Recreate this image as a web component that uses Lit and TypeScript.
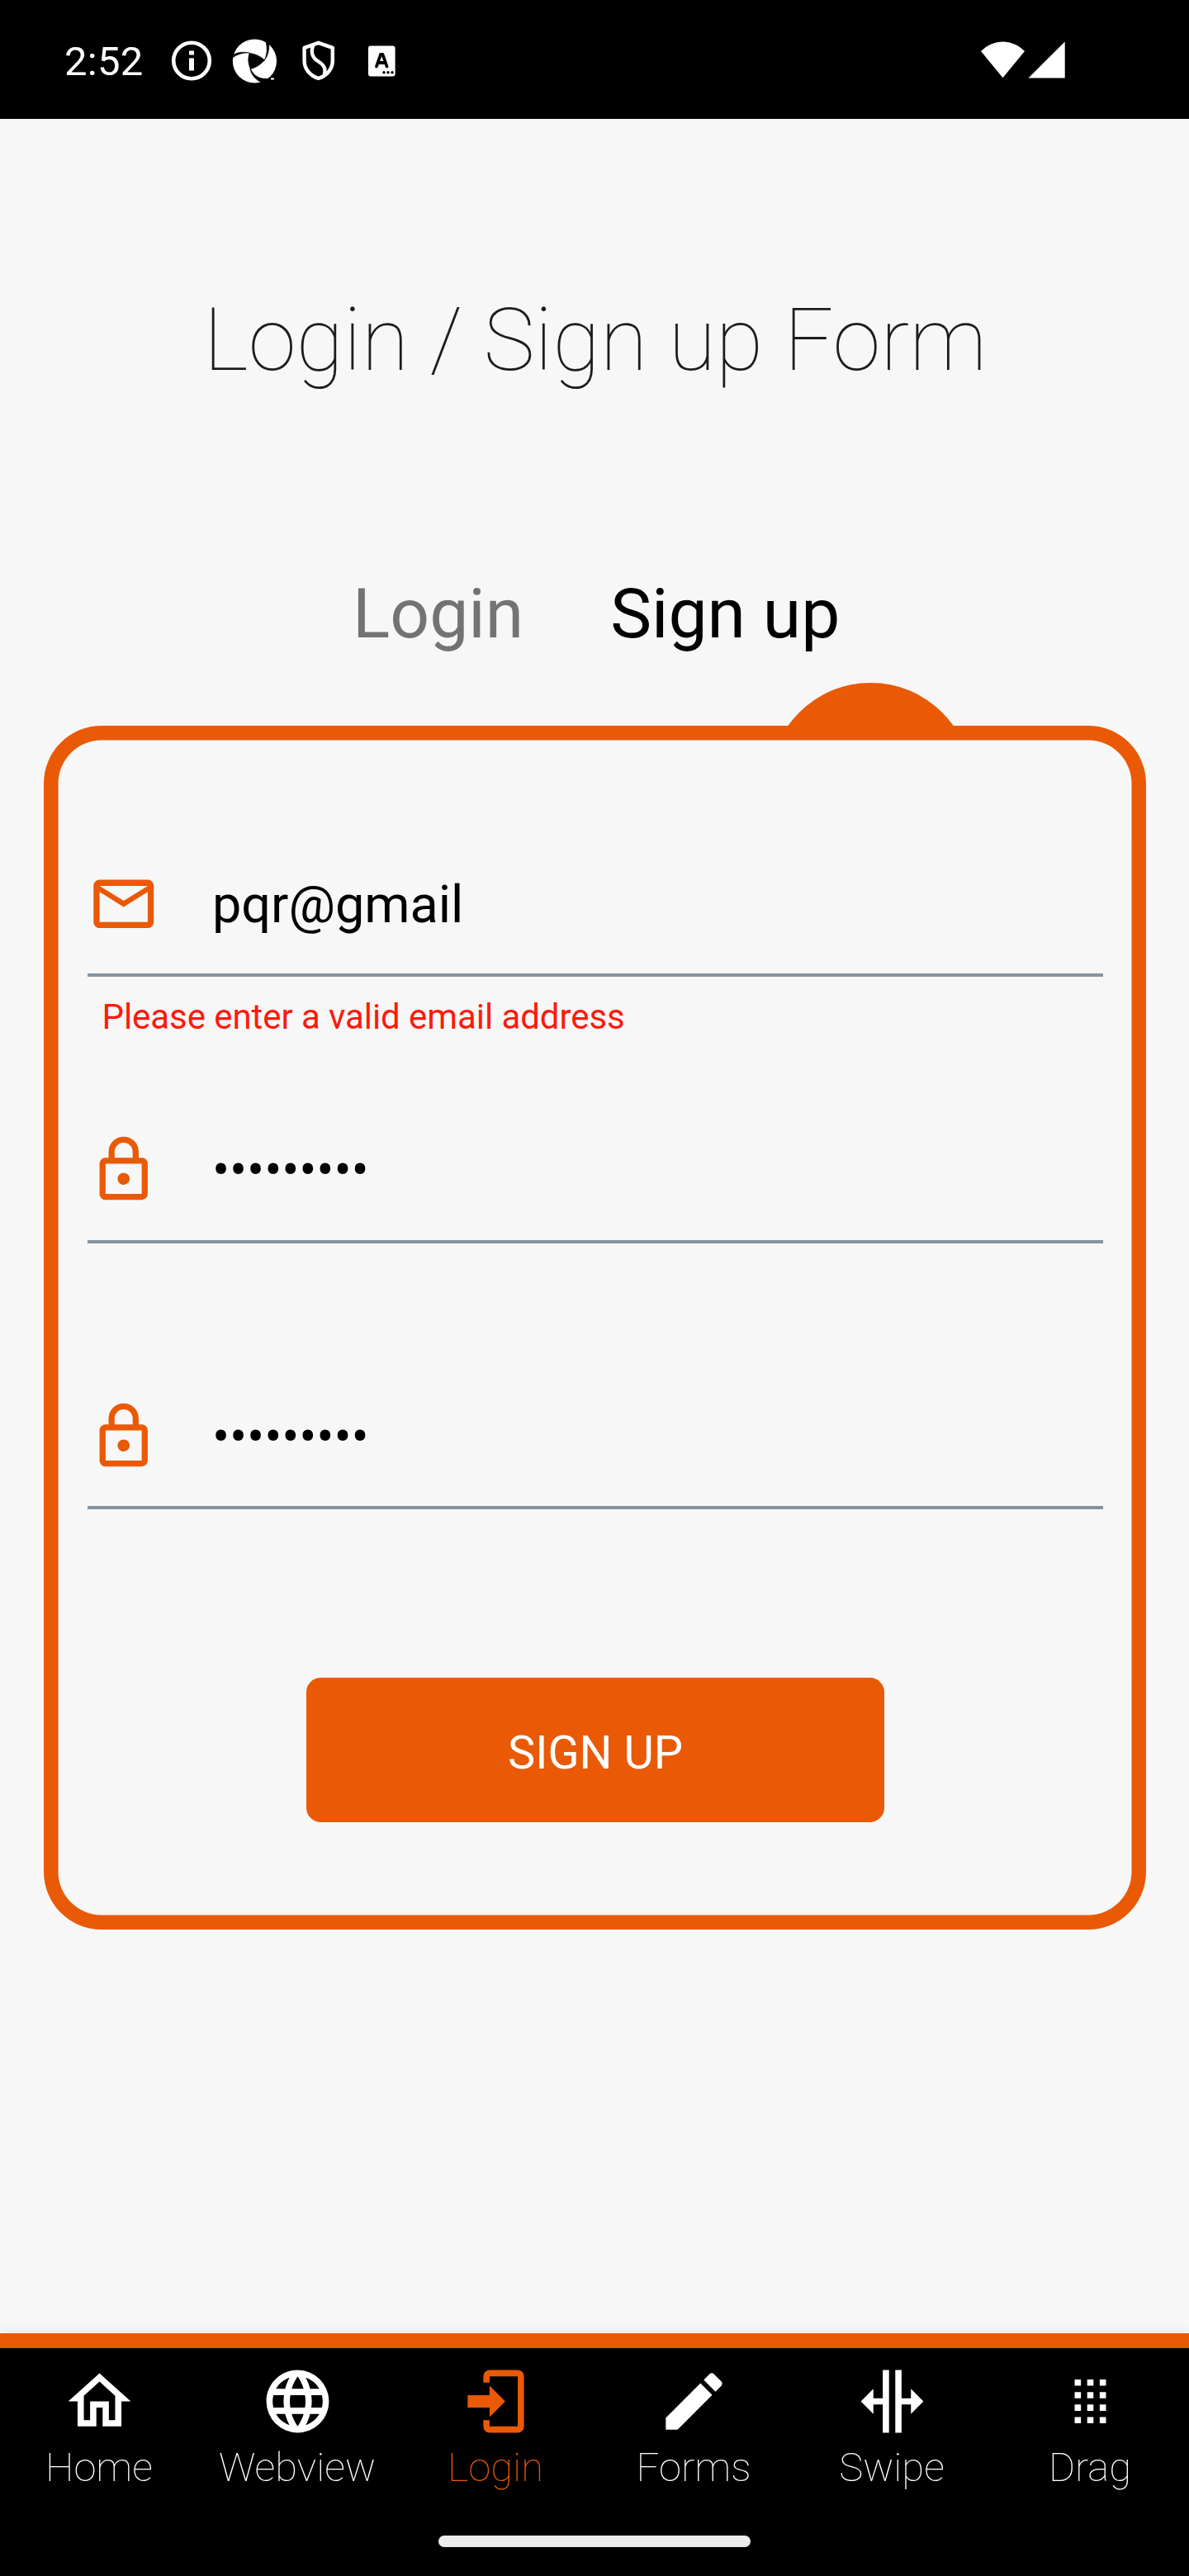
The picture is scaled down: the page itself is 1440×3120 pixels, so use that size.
import { LitElement, html, css, svg } from "lit";
import { customElement, property } from "lit/decorators.js";

const ICONS: Record<string, string> = {
  home: "M12,5.69L17,10.19V18H15V12H9V18H7V10.19L12,5.69M12,3L2,12H5V20H11V14H13V20H19V12H22L12,3Z",
  web: "M16.36,14C16.44,13.34 16.5,12.68 16.5,12C16.5,11.32 16.44,10.66 16.36,10H19.74C19.9,10.64 20,11.31 20,12C20,12.69 19.9,13.36 19.74,14M14.59,19.56C15.19,18.45 15.65,17.25 15.97,16H18.92C17.96,17.65 16.43,18.93 14.59,19.56M14.34,14H9.66C9.56,13.34 9.5,12.68 9.5,12C9.5,11.32 9.56,10.65 9.66,10H14.34C14.43,10.65 14.5,11.32 14.5,12C14.5,12.68 14.43,13.34 14.34,14M12,19.96C11.17,18.76 10.5,17.43 10.09,16H13.91C13.5,17.43 12.83,18.76 12,19.96M8,8H5.08C6.03,6.34 7.57,5.06 9.4,4.44C8.8,5.55 8.35,6.75 8,8M5.08,16H8C8.35,17.25 8.8,18.45 9.4,19.56C7.57,18.93 6.03,17.65 5.08,16M4.26,14C4.1,13.36 4,12.69 4,12C4,11.31 4.1,10.64 4.26,10H7.64C7.56,10.66 7.5,11.32 7.5,12C7.5,12.68 7.56,13.34 7.64,14M12,4.03C12.83,5.23 13.5,6.57 13.91,8H10.09C10.5,6.57 11.17,5.23 12,4.03M18.92,8H15.97C15.65,6.75 15.19,5.55 14.59,4.44C16.43,5.07 17.96,6.34 18.92,8M12,2C6.47,2 2,6.5 2,12A10,10 0 0,0 12,22A10,10 0 0,0 22,12A10,10 0 0,0 12,2Z",
  login: "M10,17V14H3V10H10V7L15,12L10,17M10,2H19A2,2 0 0,1 21,4V20A2,2 0 0,1 19,22H10A2,2 0 0,1 8,20V18H10V20H19V4H10V6H8V4A2,2 0 0,1 10,2Z",
  pencil: "M20.71,7.04C21.1,6.65 21.1,6 20.71,5.63L18.37,3.29C18,2.9 17.35,2.9 16.96,3.29L15.12,5.12L18.87,8.87M3,17.25V21H6.75L17.81,9.93L14.06,6.18L3,17.25Z",
  swipe: "M18,16V13H15V22H13V2H15V11H18V8L22,12L18,16M2,12L6,16V13H9V22H11V2H9V11H6V8L2,12Z",
  drag: "M7,19V17H9V19H7M11,19V17H13V19H11M15,19V17H17V19H15M7,15V13H9V15H7M11,15V13H13V15H11M15,15V13H17V15H15M7,11V9H9V11H7M11,11V9H13V11H11M15,11V9H17V11H15M7,7V5H9V7H7M11,7V5H13V7H11M15,7V5H17V7H15Z",
  email: "M22,6C22,4.9 21.1,4 20,4H4C2.9,4 2,4.9 2,6V18C2,19.1 2.9,20 4,20H20C21.1,20 22,19.1 22,18V6M20,6L12,11L4,6H20M20,18H4V8L12,13L20,8V18Z",
  lock: "M12,17C10.89,17 10,16.1 10,15C10,13.89 10.89,13 12,13A2,2 0 0,1 14,15A2,2 0 0,1 12,17M18,20V10H6V20H18M18,8A2,2 0 0,1 20,10V20A2,2 0 0,1 18,22H6C4.89,22 4,21.1 4,20V10C4,8.89 4.89,8 6,8H7V6A5,5 0 0,1 12,1A5,5 0 0,1 17,6V8H18M12,3A3,3 0 0,0 9,6V8H15V6A3,3 0 0,0 12,3Z",
};

@customElement("glyph-icon")
class GlyphIcon extends LitElement {
  @property() name = "";
  static styles = css`
    :host { display: block; flex: none; }
    svg { display: block; width: 100%; height: 100%; fill: currentColor; }
  `;
  render() {
    return html`<svg viewBox="0 0 24 24">${svg`<path d=${ICONS[this.name] ?? ""}></path>`}</svg>`;
  }
}

@customElement("status-bar")
class StatusBar extends LitElement {
  static styles = css`
    :host { display: flex; height: 144px; background: #000; color: #fff; }
    .left { display: flex; align-items: center; height: 147px; padding-left: 78px; }
    .time { width: 127px; font-size: 49px; line-height: 60px; padding-top: 2px; letter-spacing: 0.3px; }
    .badges, .radio { display: block; flex: none; }
    .radio { margin-left: auto; margin-right: 140px; }
  `;
  render() {
    return html`
      <div class="left">
        <div class="time">2:52</div>
        <svg class="badges" width="290" height="60" viewBox="205 43.5 290 60">
          <circle cx="232" cy="73" r="21.8" fill="none" stroke="#fff" stroke-width="4.6"></circle>
          <path fill="#fff" d="M229,61h6v5h-6zM229,70h6v15h-6z"></path>
          <circle cx="308.4" cy="73.5" r="26.6" fill="#fff"></circle>
          <g fill="#000" stroke="#000" stroke-width="0.6">
            <path d="M302,64C309,64.5 316,68 320.5,72.5C315,78 309,82 303.3,83C300.5,77 300,70 302,64Z"></path>
            <path d="M281,66.5C287,62.6 294,61.8 302,63.6C294,63.4 288,65 281,69.8Z"></path>
            <path d="M321.5,48C324,57 323.8,65 320.2,72.5C325.3,66 326.3,59 325.6,51Z"></path>
            <path d="M302.8,83C305,91 309.5,96 317,99.6L326.5,94.6C315,96 308,92 303.4,83Z"></path>
          </g>
          <path fill="#fff" d="M328,94h4v2h-4z"></path>
          <path fill="none" stroke="#fff" stroke-width="4.4" stroke-linejoin="round" d="M385.7,51.3L402.8,57.3V73C402.8,84 395,91.5 385.7,94.5C376.5,91.5 368.6,84 368.6,73V57.3Z"></path>
          <path fill="none" stroke="#fff" stroke-width="4.4" d="M379.5,54C376,62 378,69 385,73.5C393,78.5 395,83 392.5,91"></path>
          <rect x="446" y="55" width="32.6" height="37" rx="3" fill="#fff"></rect>
          <path fill="none" stroke="#000" stroke-width="3.8" stroke-linecap="round" stroke-linejoin="round" d="M456,80L461,65.5H463.5L468.5,80M458,75.5H466.5"></path>
          <g fill="#000"><circle cx="465" cy="87.3" r="1.7"></circle><circle cx="470" cy="87.3" r="1.7"></circle><circle cx="475" cy="87.3" r="1.7"></circle></g>
        </svg>
      </div>
      <svg class="radio" width="112" height="144" viewBox="1188 0 112 144" fill="#fff">
        <path d="M1188,62C1203,46.5 1226,46.5 1241,62L1214.5,94.3Z"></path>
        <path d="M1289.7,50.5V94.5H1245.5Z"></path>
      </svg>
    `;
  }
}

@customElement("form-field")
class FormField extends LitElement {
  @property() icon = "";
  @property() value = "";
  @property() error = "";
  static styles = css`
    :host { display: flex; flex-direction: column; height: 322.5px; }
    .row { display: flex; align-items: center; height: 140px; }
    glyph-icon { width: 87.5px; height: 87.5px; color: #ea5906; margin-top: -30px; }
    .value { margin-left: 63.5px; font-size: 63px; line-height: 80px; margin-top: -27px; color: #000; white-space: pre; letter-spacing: -0.05px; }
    .value.masked { letter-spacing: -0.2px; }
    .line { height: 4px; background: #86939e; }
    .error { margin: 23.5px 0 0 17.5px; font-size: 42px; line-height: 50px; color: #ff190c; letter-spacing: -0.07px; }
  `;
  render() {
    const masked = this.icon === "lock";
    return html`
      <div class="row"><glyph-icon name=${this.icon}></glyph-icon><div class="value ${masked ? "masked" : ""}">${this.value}</div></div>
      <div class="line"></div>
      ${this.error ? html`<div class="error">${this.error}</div>` : ""}
    `;
  }
}

const TABS = [
  ["home", "Home"],
  ["web", "Webview"],
  ["login", "Login"],
  ["pencil", "Forms"],
  ["swipe", "Swipe"],
  ["drag", "Drag"],
];

@customElement("tab-bar")
class TabBar extends LitElement {
  @property() active = "Login";
  static styles = css`
    :host { display: flex; flex-direction: column; align-items: center; height: 276px; background: #000; border-top: 18px solid #ea5906; box-shadow: 0 -2px 14px rgba(0, 0, 0, 0.07); }
    .tabs { display: grid; grid-template-columns: repeat(6, 1fr); width: 100%; height: 227px; }
    .tab { display: flex; flex-direction: column; align-items: center; padding-top: 18.5px; color: #fff; }
    .tab.active { color: #ea5906; }
    glyph-icon { width: 91px; height: 91px; }
    .label { margin-top: 5px; font-size: 49px; line-height: 60px; font-weight: 100; }
    .pill { width: 378px; height: 14px; border-radius: 7px; background: #ececec; }
  `;
  render() {
    return html`
      <div class="tabs">
        ${TABS.map(([icon, label]) => html`
          <div class="tab ${label === this.active ? "active" : ""}">
            <glyph-icon name=${icon}></glyph-icon>
            <div class="label">${label}</div>
          </div>`)}
      </div>
      <div class="pill"></div>
    `;
  }
}

@customElement("app-root")
class AppRoot extends LitElement {
  static styles = css`
    :host { display: flex; flex-direction: column; width: 1440px; height: 3120px; overflow: hidden; background: #f7f7f7; font-family: Roboto, sans-serif; }
    status-bar, tab-bar { flex: none; }
    main { flex: 1; display: flex; flex-direction: column; }
    h1 { margin: 207px 0 0; text-align: center; font-size: 105px; line-height: 124px; font-weight: 100; color: #1c1b1f; padding-left: 2px; }
    .modes { display: flex; gap: 105px; margin-top: 219px; padding-left: 427px; font-size: 84px; line-height: 100px; height: 133px; }
    .mode { color: #737373; }
    .mode.active { color: #000; }
    .bump { height: 52px; margin-left: 932px; width: 245px; overflow: hidden; }
    .disc { width: 245px; height: 245px; border-radius: 50%; background: #ea5906; }
    .card { box-sizing: border-box; margin: 0 52px 0 53px; height: 1458px; border-radius: 70px; box-shadow: inset 0 0 0 17.5px #ea5906; padding: 160.25px 52px 0 53px; }
    .submit { display: flex; align-items: center; justify-content: center; box-sizing: border-box; width: 700px; height: 175px; margin: 25.25px 0 0 265px; padding: 7px 0 0; border: 0; border-radius: 17.5px; background: #ea5906; color: #fff; font-family: inherit; font-size: 56px; line-height: 66px; }
  `;
  render() {
    return html`
      <status-bar></status-bar>
      <main>
        <h1>Login / Sign up Form</h1>
        <div class="modes"><span class="mode">Login</span><span class="mode active">Sign up</span></div>
        <div class="bump"><div class="disc"></div></div>
        <section class="card">
          <form-field icon="email" value="pqr@gmail" error="Please enter a valid email address"></form-field>
          <form-field icon="lock" value="•••••••••"></form-field>
          <form-field icon="lock" value="•••••••••"></form-field>
          <button class="submit">SIGN UP</button>
        </section>
      </main>
      <tab-bar active="Login"></tab-bar>
    `;
  }
}
